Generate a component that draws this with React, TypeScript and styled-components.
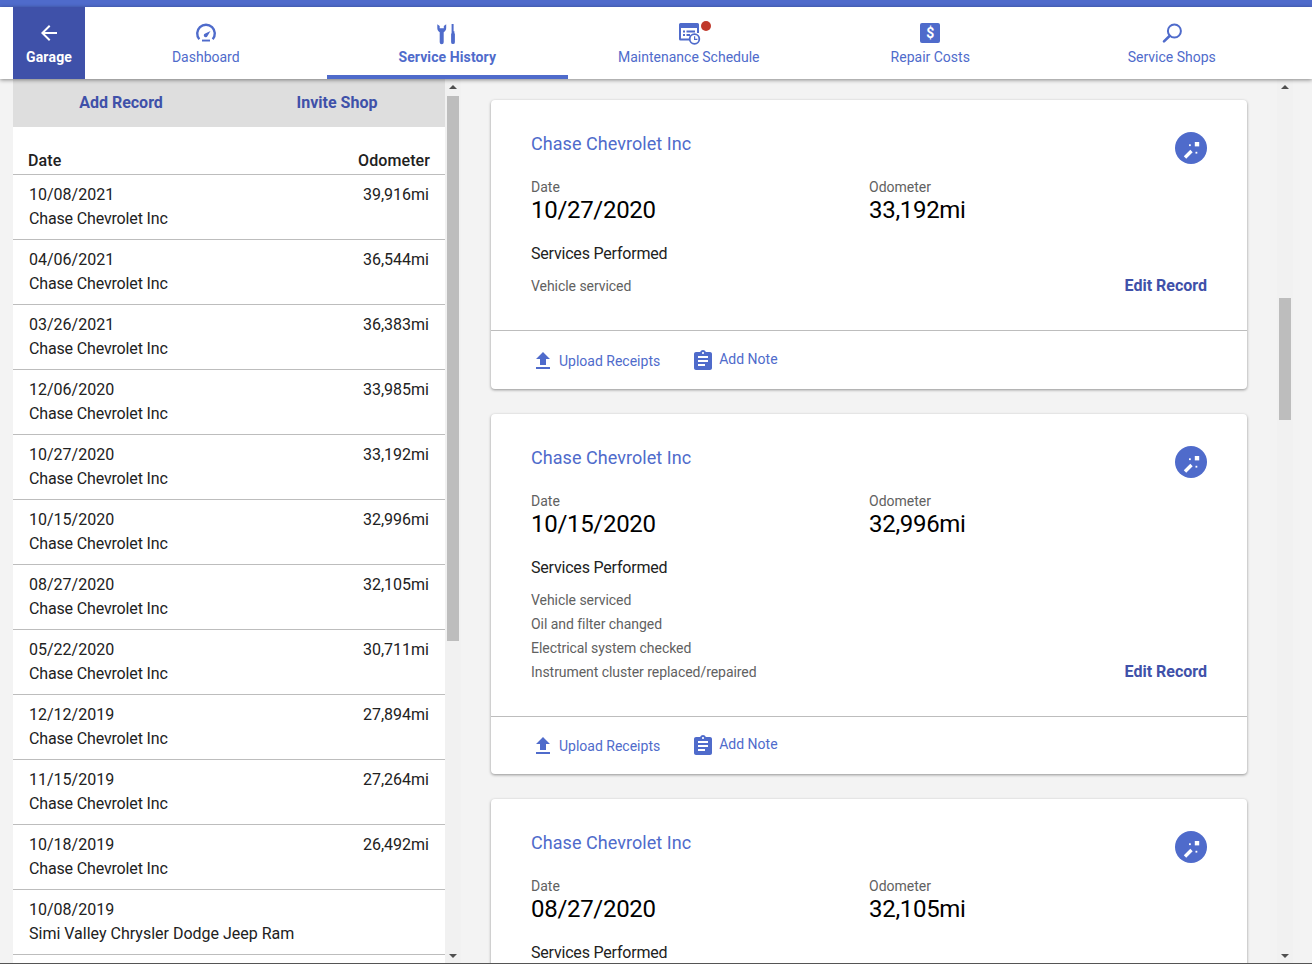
import React from "react";
import styled, { createGlobalStyle } from "styled-components";

const Blue = "#4f6bcb";
const DarkBlue = "#3f51a9";

const GlobalStyle = createGlobalStyle`
    html, body {
        margin: 0;
        padding: 0;
        background: #f3f3f3;
        font-family: Roboto, "Liberation Sans", sans-serif;
    }
`;

// =============================================================================
// DATA
// =============================================================================
const tabs = [
    { label: "Dashboard", icon: "gauge" },
    { label: "Service History", icon: "tools", active: true },
    { label: "Maintenance Schedule", icon: "calendar", badge: true },
    { label: "Repair Costs", icon: "dollar" },
    { label: "Service Shops", icon: "search" },
];

const records = [
    ["10/08/2021", "39,916mi", "Chase Chevrolet Inc"],
    ["04/06/2021", "36,544mi", "Chase Chevrolet Inc"],
    ["03/26/2021", "36,383mi", "Chase Chevrolet Inc"],
    ["12/06/2020", "33,985mi", "Chase Chevrolet Inc"],
    ["10/27/2020", "33,192mi", "Chase Chevrolet Inc"],
    ["10/15/2020", "32,996mi", "Chase Chevrolet Inc"],
    ["08/27/2020", "32,105mi", "Chase Chevrolet Inc"],
    ["05/22/2020", "30,711mi", "Chase Chevrolet Inc"],
    ["12/12/2019", "27,894mi", "Chase Chevrolet Inc"],
    ["11/15/2019", "27,264mi", "Chase Chevrolet Inc"],
    ["10/18/2019", "26,492mi", "Chase Chevrolet Inc"],
    ["10/08/2019", "", "Simi Valley Chrysler Dodge Jeep Ram"],
];

const cards = [
    {
        date: "10/27/2020",
        odometer: "33,192mi",
        services: ["Vehicle serviced"],
    },
    {
        date: "10/15/2020",
        odometer: "32,996mi",
        services: [
            "Vehicle serviced",
            "Oil and filter changed",
            "Electrical system checked",
            "Instrument cluster replaced/repaired",
        ],
    },
    {
        date: "08/27/2020",
        odometer: "32,105mi",
        services: ["Vehicle serviced"],
    },
];

// =============================================================================
// ICONS
// =============================================================================
const TabIcon = ({ name }: { name: string }) => {
    if (name === "gauge") {
        return (
            <svg width="24" height="24" viewBox="0 0 24 24" fill="none">
                <path
                    d="M5.300 18.200A8.800 8.800 0 1 1 18.700 18.200"
                    stroke={Blue}
                    strokeWidth="2.400"
                />
                <path d="M8 20.500h8v-1.900H8z" fill={Blue} />
                <path d="M16.500 10l-5.300 2.600a1.900 1.900 0 1 0 2.300 2.300z" fill={Blue} />
            </svg>
        );
    }
    if (name === "tools") {
        return (
            <svg width="24" height="24" viewBox="0 0 24 24" fill={Blue}>
                <path d="M2.300 3.200v3.800c0 2 1 3.500 2.400 4.200v10a2 2 0 0 0 4 0v-10c1.400-.7 2.500-2.200 2.500-4.200V3.200L8.800 5v2.200H4.700V5z" />
                <path d="M16.600 3h2v7.300h.8v2.200h.5v8.700a1.900 1.900 0 0 1-3.800 0v-8.700h.5v-2.200z" />
            </svg>
        );
    }
    if (name === "calendar") {
        return (
            <svg width="24" height="24" viewBox="0 0 24 24" fill={Blue}>
                <path d="M3.500 2h17a1.500 1.500 0 0 1 1.500 1.500V12h-2V7H4v10.500h8.500v2h-9A1.500 1.500 0 0 1 2 18V3.500A1.500 1.500 0 0 1 3.500 2z" />
                <path d="M6 9.500h2v2H6zm3.500 0H18v2H9.500zM6 13h2v2H6zm3.500 0h3.500v2H9.500z" />
                <circle cx="17.500" cy="18" r="4.800" fill="#fff" stroke={Blue} strokeWidth="1.800" />
                <path d="M17 15.200h1.200v2.500h2.200v1.200H17z" />
            </svg>
        );
    }
    if (name === "search") {
        return (
            <svg width="24" height="24" viewBox="0 0 24 24" fill="none">
                <circle cx="14.400" cy="10" r="6.500" stroke={Blue} strokeWidth="2" />
                <path d="M9.800 14.800L4 20.400" stroke={Blue} strokeWidth="2.600" strokeLinecap="round" />
            </svg>
        );
    }
    return null;
};

const BackIcon = () => (
    <svg width="24" height="24" viewBox="0 0 24 24" fill="#fff">
        <path d="M20 11H7.830l5.590-5.590L12 4l-8 8 8 8 1.410-1.410L7.830 13H20v-2z" />
    </svg>
);

const UploadIcon = () => (
    <svg width="24" height="24" viewBox="0 0 24 24" fill={Blue}>
        <path d="M9 16h6v-6h4l-7-7-7 7h4zm-4 2h14v2H5z" />
    </svg>
);

const NoteIcon = () => (
    <svg width="24" height="24" viewBox="0 0 24 24" fill={Blue}>
        <path d="M19 3h-4.180C14.400 1.840 13.300 1 12 1c-1.300 0-2.400.84-2.820 2H5c-1.100 0-2 .9-2 2v14c0 1.100.9 2 2 2h14c1.100 0 2-.9 2-2V5c0-1.100-.9-2-2-2zm-7 0c.55 0 1 .45 1 1s-.45 1-1 1-1-.45-1-1 .45-1 1-1zm2 14H7v-2h7v2zm3-4H7v-2h10v2zm0-4H7V7h10v2z" />
    </svg>
);

const WandIcon = () => (
    <svg width="32" height="32" viewBox="0 0 32 32" fill="#fff">
        <path d="M10 25.500l6.500-6.500" stroke="#fff" strokeWidth="3.400" />
        <rect x="19.800" y="10" width="4.400" height="4.400" />
        <rect x="14" y="12.300" width="1.800" height="1.800" />
        <rect x="20.500" y="19.800" width="1.800" height="1.800" />
    </svg>
);

// =============================================================================
// NAV
// =============================================================================
const Stripe = styled.div`
    height: 7px;
    background: ${Blue};
`;

const Nav = styled.nav`
    position: relative;
    z-index: 2;
    display: flex;
    height: 72px;
    padding-left: 13px;
    background: #fff;
    box-shadow: 0 1px 4px rgba(0, 0, 0, 0.45);
`;

const GarageButton = styled.div`
    display: flex;
    flex-direction: column;
    align-items: center;
    gap: 2px;
    width: 72px;
    padding-top: 14px;
    box-sizing: border-box;
    background: ${DarkBlue};
    color: #fff;
    font-size: 14px;
    font-weight: 700;
    line-height: 20px;
    letter-spacing: 0.2px;
`;

const Tab = styled.div<{ $active?: boolean }>`
    display: flex;
    flex-direction: column;
    align-items: center;
    width: 241.5px;
    padding-top: 14px;
    box-sizing: border-box;
    color: ${Blue};
    font-size: 14px;
    font-weight: ${(p) => (p.$active ? 700 : 400)};
    line-height: 20px;
    letter-spacing: ${(p) => (p.$active ? 0.1 : 0)}px;
    border-bottom: 4px solid ${(p) => (p.$active ? Blue : "transparent")};
`;

const TabGlyph = styled.div`
    position: relative;
    width: 24px;
    height: 24px;
    margin-bottom: 2px;
`;

const Badge = styled.span`
    position: absolute;
    top: 0;
    left: 24px;
    width: 10px;
    height: 10px;
    border-radius: 50%;
    background: #c0392b;
`;

const DollarBox = styled.div`
    display: flex;
    align-items: center;
    justify-content: center;
    width: 20px;
    height: 20px;
    margin: 2px;
    border-radius: 2px;
    background: ${Blue};
    color: #fff;
    font-size: 14px;
    font-weight: 700;
`;

// =============================================================================
// LAYOUT
// =============================================================================
const Main = styled.div`
    display: flex;
    height: 884px;
    overflow: hidden;
    padding-left: 13px;
    border-bottom: 1px solid #555;
`;

const ListPanel = styled.aside`
    flex: none;
    width: 432px;
    background: #fff;
`;

const ScrollTrack = styled.div`
    flex: none;
    position: relative;
    width: 16px;
    background: #f1f1f1;
`;

const ScrollThumb = styled.div<{ $top: number; $height: number }>`
    position: absolute;
    top: ${(p) => p.$top}px;
    left: 2px;
    width: 12px;
    height: ${(p) => p.$height}px;
    background: #bdbdbd;
`;

const ArrowUp = styled.div`
    position: absolute;
    top: 6px;
    left: 4px;
    border-left: 4px solid transparent;
    border-right: 4px solid transparent;
    border-bottom: 4px solid #505050;
`;

const ArrowDown = styled.div`
    position: absolute;
    bottom: 5px;
    left: 4px;
    border-left: 4px solid transparent;
    border-right: 4px solid transparent;
    border-top: 4px solid #505050;
`;

// =============================================================================
// LIST
// =============================================================================
const ListActions = styled.div`
    display: flex;
    height: 48px;
    background: #dedede;
`;

const ListAction = styled.div`
    width: 216px;
    text-align: center;
    color: ${DarkBlue};
    font-size: 16px;
    font-weight: 700;
    line-height: 48px;
`;

const ListHead = styled.div`
    display: flex;
    justify-content: space-between;
    height: 23px;
    padding: 24px 15px 0;
    border-bottom: 1px solid #bdbdbd;
    color: #212121;
    font-size: 16px;
    font-weight: 500;
    line-height: 20px;
    letter-spacing: 0.1px;
`;

const Row = styled.div`
    height: 65px;
    padding: 8px 16px 0;
    box-sizing: border-box;
    border-bottom: 1px solid #bdbdbd;
    color: #212121;
    font-size: 16px;
    line-height: 24px;
`;

const RowLine = styled.div`
    display: flex;
    justify-content: space-between;
`;

const RowShop = styled.div<{ $tight: boolean }>`
    letter-spacing: ${(p) => (p.$tight ? -0.15 : 0)}px;
`;

// =============================================================================
// CARDS
// =============================================================================
const CardArea = styled.div`
    flex: none;
    display: flex;
    flex-direction: column;
    gap: 25px;
    width: 756px;
    padding: 21px 30px 0;
`;

const Card = styled.article`
    flex: none;
    border-radius: 4px;
    background: #fff;
    box-shadow: 0 1px 3px rgba(0, 0, 0, 0.4);
`;

const CardBody = styled.div`
    padding: 32px 40px 32px;
    border-bottom: 1px solid #bdbdbd;
`;

const CardHead = styled.div`
    display: flex;
    justify-content: space-between;
    height: 32px;
`;

const ShopName = styled.div`
    color: ${Blue};
    font-size: 18px;
    line-height: 24px;
    letter-spacing: 0.05px;
`;

const WandButton = styled.div`
    width: 32px;
    height: 32px;
    border-radius: 50%;
    background: ${Blue};
`;

const Fields = styled.div`
    display: flex;
    margin-top: 14px;
`;

const Field = styled.div`
    width: 338px;
`;

const FieldLabel = styled.div`
    color: #616161;
    font-size: 14px;
    line-height: 18px;
`;

const FieldValue = styled.div`
    color: #000;
    font-size: 24px;
    line-height: 28px;
    letter-spacing: -0.3px;
`;

const ServicesTitle = styled.div`
    margin-top: 19px;
    color: #212121;
    font-size: 16px;
    line-height: 22px;
    letter-spacing: -0.2px;
`;

const ServicesRow = styled.div`
    display: flex;
    justify-content: space-between;
    align-items: flex-end;
    margin-top: 9px;
`;

const ServiceItem = styled.div`
    color: #616161;
    font-size: 14px;
    line-height: 24px;
    letter-spacing: -0.05px;
`;

const EditLink = styled.div`
    color: ${DarkBlue};
    font-size: 16px;
    font-weight: 700;
    line-height: 24px;
`;

const CardFoot = styled.div`
    display: flex;
    height: 57.5px;
    padding-left: 40px;
    align-items: center;
    color: ${Blue};
    font-size: 14px;
`;

const FootAction = styled.div<{ $lift?: boolean }>`
    display: flex;
    align-items: center;
    gap: 4px;
    margin-right: ${(p) => (p.$lift ? 0 : 31)}px;

    svg {
        position: relative;
        top: 1px;
    }

    span {
        position: relative;
        top: ${(p) => (p.$lift ? -1 : 1)}px;
    }
`;

// =============================================================================
// APP
// =============================================================================
export default function App() {
    return (
        <>
            <GlobalStyle />
            <Stripe />
            <Nav>
                <GarageButton>
                    <BackIcon />
                    Garage
                </GarageButton>
                {tabs.map((tab) => (
                    <Tab key={tab.label} $active={tab.active}>
                        <TabGlyph>
                            {tab.icon === "dollar" ? (
                                <DollarBox>$</DollarBox>
                            ) : (
                                <TabIcon name={tab.icon} />
                            )}
                            {tab.badge && <Badge />}
                        </TabGlyph>
                        {tab.label}
                    </Tab>
                ))}
            </Nav>
            <Main>
                <ListPanel>
                    <ListActions>
                        <ListAction>Add Record</ListAction>
                        <ListAction>Invite Shop</ListAction>
                    </ListActions>
                    <ListHead>
                        <span>Date</span>
                        <span>Odometer</span>
                    </ListHead>
                    {records.map(([date, odometer, shop]) => (
                        <Row key={date}>
                            <RowLine>
                                <span>{date}</span>
                                <span>{odometer}</span>
                            </RowLine>
                            <RowShop $tight={shop.startsWith("Chase")}>{shop}</RowShop>
                        </Row>
                    ))}
                </ListPanel>
                <ScrollTrack>
                    <ArrowUp />
                    <ScrollThumb $top={17} $height={545} />
                    <ArrowDown />
                </ScrollTrack>
                <CardArea>
                    {cards.map((card) => (
                        <Card key={card.date}>
                            <CardBody>
                                <CardHead>
                                    <ShopName>Chase Chevrolet Inc</ShopName>
                                    <WandButton>
                                        <WandIcon />
                                    </WandButton>
                                </CardHead>
                                <Fields>
                                    <Field>
                                        <FieldLabel>Date</FieldLabel>
                                        <FieldValue>{card.date}</FieldValue>
                                    </Field>
                                    <Field>
                                        <FieldLabel>Odometer</FieldLabel>
                                        <FieldValue>{card.odometer}</FieldValue>
                                    </Field>
                                </Fields>
                                <ServicesTitle>Services Performed</ServicesTitle>
                                <ServicesRow>
                                    <div>
                                        {card.services.map((service) => (
                                            <ServiceItem key={service}>
                                                {service}
                                            </ServiceItem>
                                        ))}
                                    </div>
                                    <EditLink>Edit Record</EditLink>
                                </ServicesRow>
                            </CardBody>
                            <CardFoot>
                                <FootAction>
                                    <UploadIcon />
                                    <span>Upload Receipts</span>
                                </FootAction>
                                <FootAction $lift>
                                    <NoteIcon />
                                    <span>Add Note</span>
                                </FootAction>
                            </CardFoot>
                        </Card>
                    ))}
                </CardArea>
                <ScrollTrack>
                    <ArrowUp />
                    <ScrollThumb $top={219} $height={122} />
                    <ArrowDown />
                </ScrollTrack>
            </Main>
        </>
    );
}
